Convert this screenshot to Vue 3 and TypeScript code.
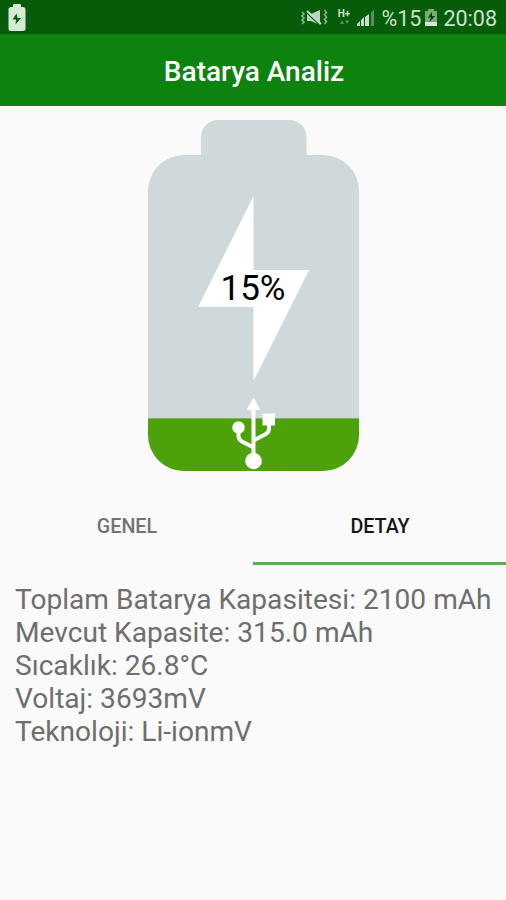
<script setup lang="ts">
import { ref, computed } from 'vue'

interface Detail {
  label: string
  value: string
}

const level = 15
const activeTab = ref(1)
const tabs = ['GENEL', 'DETAY']
const details: Detail[] = [
  { label: 'Toplam Batarya Kapasitesi', value: '2100 mAh' },
  { label: 'Mevcut Kapasite', value: '315.0 mAh' },
  { label: 'Sıcaklık', value: '26.8°C' },
  { label: 'Voltaj', value: '3693mV' },
  { label: 'Teknoloji', value: 'Li-ionmV' },
]

// The battery drawing is 351 units tall, terminal included.
const fillHeight = computed(() => (351 * level) / 100)
</script>

<template>
  <div class="screen">
    <header class="status-bar">
      <svg class="charging" width="18" height="28" viewBox="0 0 18 28">
        <path d="M6 0h6q1 0 1 1v2h2q2.500 0 2.500 2.500v19q0 2.500-2.500 2.500h-12q-2.500 0-2.500-2.500v-19q0-2.500 2.500-2.500h2v-2q0-1 1-1z" fill="#d5ebd5" />
        <path d="M8.500 9.500L4.500 15.500H8L7.500 20.500L13 14H9.500Z" fill="#075c0a" />
      </svg>
      <div class="indicators">
        <svg class="mute" width="27" height="17" viewBox="0 0 27 17">
          <path d="M6 5h4l9-4v15l-9-4H6z" fill="#b9d8b9" />
          <path d="M5.500 3.500L18.500 16" stroke="#075c0a" stroke-width="1.200" />
          <path d="M6 2L20 15" stroke="#c4dec4" stroke-width="2" />
          <path d="M1 3l2 2-2 2 2 2-2 2 2 2-2 2M23.500 1l2 2.500-2 2 2 2.500-2 2.500 2 2-2 2.500" fill="none" stroke="#86b887" stroke-width="1.600" />
        </svg>
        <div class="network">
          <span class="network-type">H+</span>
          <svg width="10" height="5" viewBox="0 0 10 5">
            <path d="M1 4l2-3.500L5 4zM6 .5h4L8 4z" fill="#579858" />
          </svg>
        </div>
        <svg class="signal" width="18" height="17" viewBox="0 0 18 17">
          <path d="M0 17v-2l3-3v5zM4 17v-6l3-3v9zM8 17V8l4-3v12z" fill="#c8dfc8" />
          <path d="M14 17V3l3-2v16z" fill="#55915a" />
        </svg>
        <span class="status-level">%{{ level }}</span>
        <svg class="mini-battery" width="12" height="17" viewBox="0 0 12 17">
          <path d="M3 0h6v2h3v15H0V2h3z" fill="#76aa77" />
          <path d="M0 13h12v4H0z" fill="#d5e8d5" />
          <path d="M7 3L3 8.500h3l-2 5 6-6.500H7z" fill="#043f06" />
        </svg>
        <span class="clock">20:08</span>
      </div>
    </header>

    <div class="app-bar">
      <h1 class="title">Batarya Analiz</h1>
    </div>

    <main class="content">
      <div class="battery">
        <svg class="battery-shape" width="211" height="351" viewBox="0 0 211 351">
          <defs>
            <clipPath id="battery-outline">
              <path d="M53 35V17A17 17 0 0 1 70 0H141.500A17 17 0 0 1 158.500 17V35H175A36 36 0 0 1 211 71V315A36 36 0 0 1 175 351H36A36 36 0 0 1 0 315V71A36 36 0 0 1 36 35Z" />
            </clipPath>
          </defs>
          <g clip-path="url(#battery-outline)">
            <rect width="211" height="351" fill="#cfd8da" />
            <rect :y="351 - fillHeight" width="211" :height="fillHeight" fill="#4da20b" />
          </g>
          <path d="M105.500 76V150H161L105.500 261V187H50Z" fill="#fff" />
          <g fill="#fff">
            <path d="M105.500 277.500L112.500 290H98.500Z" />
            <circle cx="105.500" cy="341" r="8.300" />
            <circle cx="90.500" cy="307.500" r="6.200" />
            <rect x="114.500" y="293.500" width="12.500" height="12" />
          </g>
          <path d="M105.500 288V340M90.500 309V316Q90.500 319.500 94 321.500L105.500 327.500M121 303V309Q121 312.500 117 314.500L105.500 320.500" fill="none" stroke="#fff" stroke-width="4" />
        </svg>
        <span class="percentage">{{ level }}%</span>
      </div>

      <nav class="tabs">
        <button
          v-for="(tab, i) in tabs"
          :key="tab"
          class="tab"
          :class="{ active: activeTab === i }"
          @click="activeTab = i"
        >{{ tab }}</button>
      </nav>

      <section class="details">
        <p v-for="item in details" :key="item.label" class="detail">{{ item.label }}: {{ item.value }}</p>
      </section>
    </main>
  </div>
</template>

<style>
body {
  margin: 0;
  background: #fafafa;
}
</style>

<style scoped>
.screen {
  min-height: 900px;
  overflow: hidden;
  background: #fafafa;
  font-family: Roboto, "Liberation Sans", sans-serif;
}

.status-bar {
  display: flex;
  justify-content: space-between;
  box-sizing: border-box;
  height: 34px;
  padding: 4px 9px 0 8px;
  background: #075c0a;
  color: #cce3cc;
}

.indicators {
  display: flex;
  align-items: flex-start;
  height: 28px;
  line-height: 29px;
  font-size: 21.500px;
}

.mute {
  margin: 5px 10px 0 0;
}

.network {
  display: flex;
  flex-direction: column;
  align-items: center;
  gap: 2px;
  width: 13px;
  margin: 5px 6px 0 0;
}

.network-type {
  font-size: 10px;
  font-weight: 700;
  line-height: 9px;
}

.signal {
  margin: 5px 7px 0 0;
}

.mini-battery {
  margin: 5px 6px 0 4px;
}

.app-bar {
  display: flex;
  align-items: center;
  justify-content: center;
  box-sizing: border-box;
  height: 72px;
  padding: 4px 0 0 2px;
  background: #0c830e;
}

.title {
  margin: 0;
  color: #fff;
  font-size: 28px;
  font-weight: 500;
  line-height: 36px;
}

.content {
  display: flex;
  flex-direction: column;
  padding-top: 14px;
}

.battery {
  position: relative;
  align-self: center;
  width: 211px;
  height: 351px;
}

.battery-shape {
  display: block;
}

.percentage {
  position: absolute;
  top: 149px;
  left: 0;
  width: 100%;
  color: #000;
  font-size: 35px;
  line-height: 40px;
  text-align: center;
}

.tabs {
  display: flex;
  height: 67px;
  margin-top: 27px;
}

.tab {
  flex: 1;
  box-sizing: border-box;
  padding: 0 0 7px 1px;
  border: 0;
  border-bottom: 3px solid transparent;
  background: none;
  color: #737373;
  font-family: inherit;
  font-size: 19.700px;
  font-weight: 500;
}

.tab.active {
  border-bottom-color: #5aab5e;
  color: #151515;
}

.details {
  padding: 18px 14px 0 15px;
}

.detail {
  margin: 0;
  color: #6e6e6e;
  font-size: 28.120px;
  line-height: 33px;
  white-space: nowrap;
}
</style>
